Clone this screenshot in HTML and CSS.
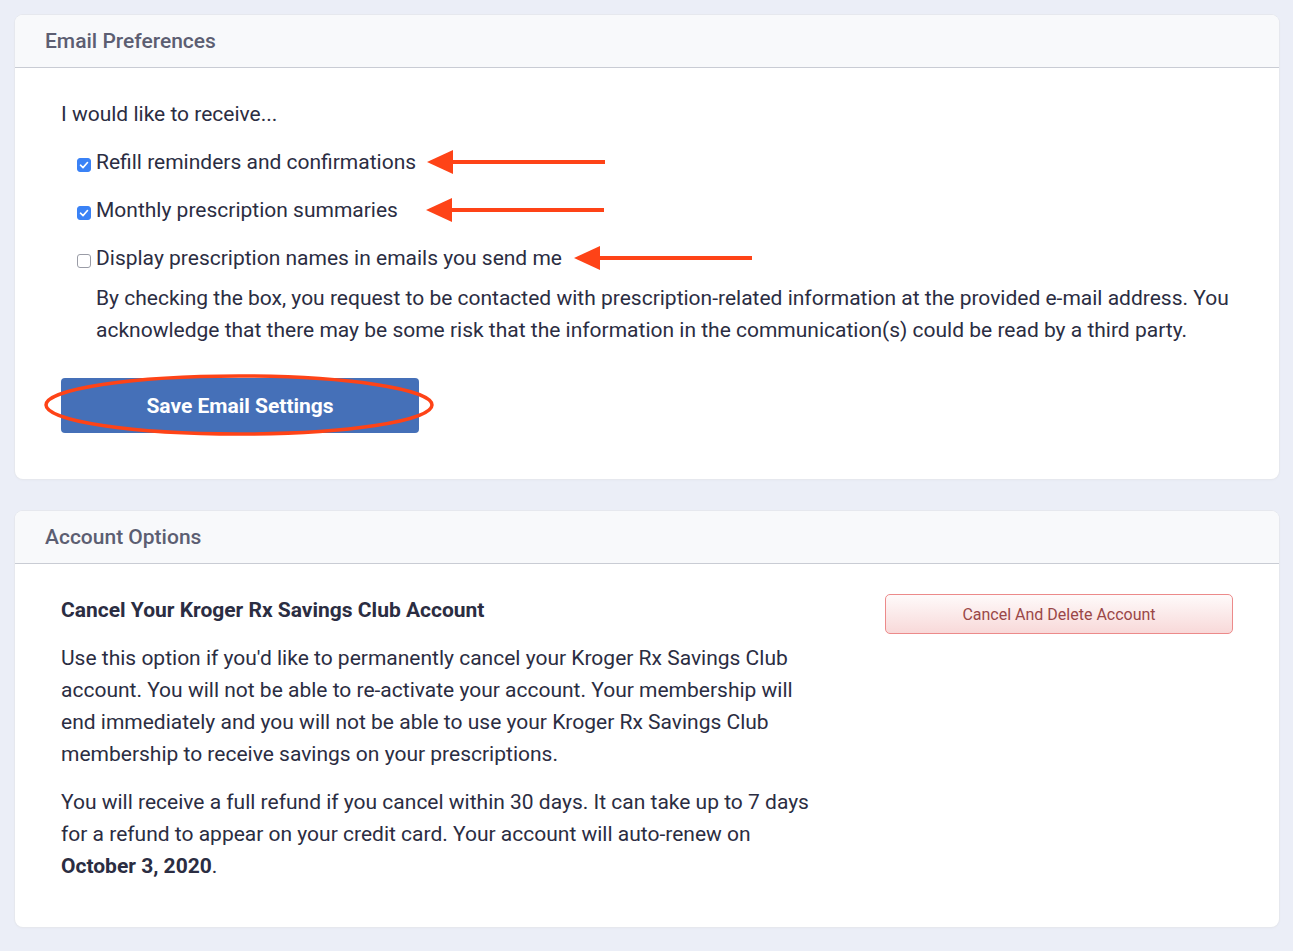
FILE: index.html
```html
<!DOCTYPE html>
<html>
<head>
<meta charset="utf-8">
<link rel="stylesheet" href="styles.css">
</head>
<body>
<div class="page">
  <section class="card">
    <div class="card-header">Email Preferences</div>
    <div class="card-body prefs">
      <p class="intro">I would like to receive...</p>
      <div class="opt">
        <span class="cb checked"><svg viewBox="0 0 14 14" width="14" height="14"><path d="M3.5 7.2 L6 9.6 L10.5 4.5" fill="none" stroke="#fff" stroke-width="1.6" stroke-linecap="round" stroke-linejoin="round"/></svg></span>
        <span class="label">Refill reminders and confirmations</span>
        <svg class="arrow" width="178" height="26" viewBox="0 0 178 26"><path d="M0 13 L26 1 L26 25 Z" fill="#fe4317"/><rect x="22" y="11" width="156" height="4" fill="#fe4317"/></svg>
      </div>
      <div class="opt">
        <span class="cb checked"><svg viewBox="0 0 14 14" width="14" height="14"><path d="M3.5 7.2 L6 9.6 L10.5 4.5" fill="none" stroke="#fff" stroke-width="1.6" stroke-linecap="round" stroke-linejoin="round"/></svg></span>
        <span class="label">Monthly prescription summaries</span>
        <svg class="arrow a2" width="178" height="26" viewBox="0 0 178 26"><path d="M0 13 L26 1 L26 25 Z" fill="#fe4317"/><rect x="22" y="11" width="156" height="4" fill="#fe4317"/></svg>
      </div>
      <div class="opt">
        <span class="cb"></span>
        <span class="label">Display prescription names in emails you send me</span>
        <svg class="arrow a3" width="178" height="26" viewBox="0 0 178 26"><path d="M0 13 L26 1 L26 25 Z" fill="#fe4317"/><rect x="22" y="11" width="156" height="4" fill="#fe4317"/></svg>
      </div>
      <p class="disclaimer">By checking the box, you request to be contacted with prescription-related information at the provided e-mail address. You acknowledge that there may be some risk that the information in the communication(s) could be read by a third party.</p>
      <div class="save-wrap">
        <button class="save">Save Email Settings</button>
        <svg class="ring" width="392" height="66" viewBox="0 0 392 66"><ellipse cx="196" cy="33" rx="193" ry="29" fill="none" stroke="#fe4317" stroke-width="3.5"/></svg>
      </div>
    </div>
  </section>

  <section class="card">
    <div class="card-header">Account Options</div>
    <div class="card-body account">
      <div class="acc-text">
        <h3>Cancel Your Kroger Rx Savings Club Account</h3>
        <p>Use this option if you'd like to permanently cancel your Kroger Rx Savings Club account. You will not be able to re-activate your account. Your membership will end immediately and you will not be able to use your Kroger Rx Savings Club membership to receive savings on your prescriptions.</p>
        <p>You will receive a full refund if you cancel within 30 days. It can take up to 7 days for a refund to appear on your credit card. Your account will auto-renew on <strong>October 3, 2020</strong>.</p>
      </div>
      <div class="acc-action">
        <button class="danger">Cancel And Delete Account</button>
      </div>
    </div>
  </section>
</div>
</body>
</html>
```

FILE: styles.css
```css
* { box-sizing: border-box; }
html, body { margin: 0; padding: 0; }
body {
  background: #ebeef7;
  font-family: Roboto, "Liberation Sans", sans-serif;
  color: #2b2d42;
}
.page {
  padding: 15px 14px 24px 15px;
  display: flex;
  flex-direction: column;
  gap: 32px;
}
.card {
  background: #fff;
  border-radius: 8px;
  box-shadow: 0 0 0 1px #e6e8ee, 0 1px 3px rgba(0,0,0,0.04);
  overflow: hidden;
}
.card-header {
  background: #f8f9fb;
  height: 53px;
  border-bottom: 1px solid #c9ccd4;
  padding: 0 30px;
  display: flex;
  align-items: center;
  font-size: 21px;
  font-weight: 500;
  color: #5c5e72;
}
.card-body { padding: 30px 46px 46px 46px; }
.prefs p { margin: 0; }
.intro {
  font-size: 21px;
  line-height: 32px;
  margin-bottom: 16px !important;
}
.opt {
  display: flex;
  align-items: center;
  height: 32px;
  margin-left: 16px;
  margin-bottom: 16px;
  font-size: 21px;
}
.opt:nth-of-type(3) { margin-bottom: 8px; }
.cb {
  width: 14px;
  height: 14px;
  border: 1px solid #9a9ca6;
  border-radius: 3px;
  margin-right: 5px;
  margin-top: 5px;
  display: inline-flex;
  background: #fff;
  flex: none;
}
.cb.checked { background: #3a82f6; border-color: #3a82f6; }
.cb svg { display: block; margin: -1px; }
.label { white-space: nowrap; }
.arrow { margin-left: 11px; flex: none; }
.a2 { margin-left: 28px; }
.a3 { margin-left: 12px; }
.disclaimer {
  margin-left: 35px !important;
  font-size: 21px;
  line-height: 32px;
}
.save-wrap {
  position: relative;
  margin-top: 32px;
  width: 358px;
  height: 55px;
}
.save {
  width: 358px;
  height: 55px;
  background: #4570b8;
  border: none;
  border-radius: 4px;
  color: #fff;
  font-family: Roboto, "Liberation Sans", sans-serif;
  font-size: 21px;
  font-weight: 700;
}
.ring {
  position: absolute;
  left: -18px;
  top: -6px;
  pointer-events: none;
}
.account {
  display: flex;
  justify-content: space-between;
  padding: 34px 46px 45px 46px;
}
.acc-text { width: 765px; }
.acc-text h3 {
  margin: 0 0 20px;
  font-size: 21px;
  line-height: 24px;
  font-weight: 700;
}
.acc-text p {
  margin: 0 0 16px;
  font-size: 21px;
  line-height: 32px;
}
.acc-text p:last-child { margin-bottom: 0; }
.acc-text strong { font-weight: 700; }
.acc-action { margin-top: -4px; }
.danger {
  width: 348px;
  height: 40px;
  border: 1px solid #ec8a8a;
  border-radius: 5px;
  background: linear-gradient(#fefafa, #f8d9d9);
  color: #9a4747;
  font-family: Roboto, "Liberation Sans", sans-serif;
  font-size: 16px;
}
```
